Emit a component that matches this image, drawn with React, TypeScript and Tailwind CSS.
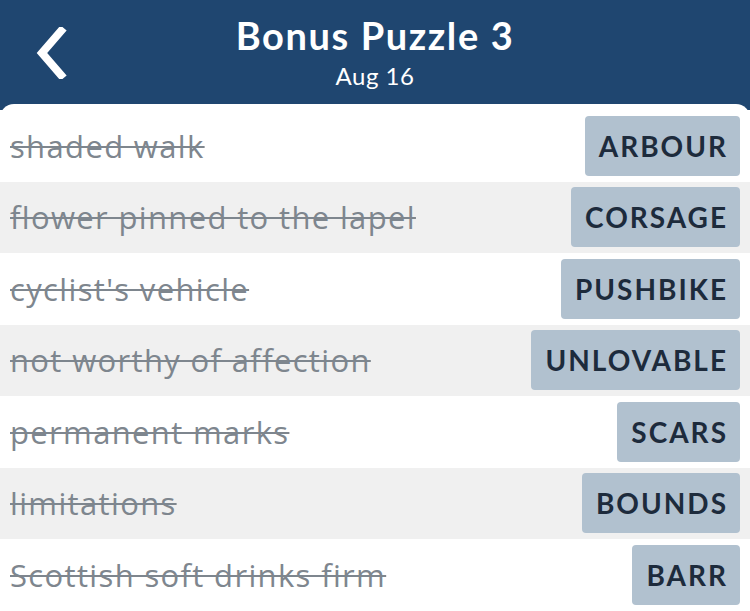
const clues = [
  { clue: 'shaded walk', answer: 'ARBOUR' },
  { clue: 'flower pinned to the lapel', answer: 'CORSAGE' },
  { clue: "cyclist's vehicle", answer: 'PUSHBIKE' },
  { clue: 'not worthy of affection', answer: 'UNLOVABLE' },
  { clue: 'permanent marks', answer: 'SCARS' },
  { clue: 'limitations', answer: 'BOUNDS' },
  { clue: 'Scottish soft drinks firm', answer: 'BARR' },
]

export default function App() {
  return (
    <div className="w-[750px] h-[611px] overflow-hidden bg-[#1f4670] font-['Lato','Open_Sans',sans-serif]">
      {/* Header */}
      <div className="relative h-[104px] flex flex-col items-center text-white">
        <button className="absolute left-[31px] top-[26px] w-[40px] h-[54px] flex items-center justify-center">
          <svg width="34" height="52" viewBox="0 0 34 52">
            <path d="M27 4 L8 26 L27 48" fill="none" stroke="white" strokeWidth="8" strokeLinecap="square" />
          </svg>
        </button>
        <h1 className="mt-[12px] text-[38px] leading-[46px] font-bold tracking-[1.6px]">Bonus Puzzle 3</h1>
        <p className="mt-[4px] text-[24px] leading-[28px] tracking-[0.5px]">Aug 16</p>
      </div>

      {/* List */}
      <div className="bg-white rounded-t-[14px] pt-[6px] h-[507px]">
        {clues.map((c, i) => (
          <div
            key={c.answer}
            className={`h-[71.5px] flex items-center justify-between pl-[10px] pr-[10px] ${i % 2 === 1 ? 'bg-[#f0f0f0]' : 'bg-white'}`}
          >
            <span className="font-['Open_Sans',sans-serif] text-[31px] text-[#7e868e] line-through decoration-[2px] tracking-[1.35px]">
              {c.clue}
            </span>
            <span className="h-[60px] pl-[14px] pr-[12px] flex items-center rounded-[4px] bg-[#b1c1cf] text-[28px] font-bold text-[#1d2b3c] tracking-[2px]">
              {c.answer}
            </span>
          </div>
        ))}
      </div>
    </div>
  )
}
